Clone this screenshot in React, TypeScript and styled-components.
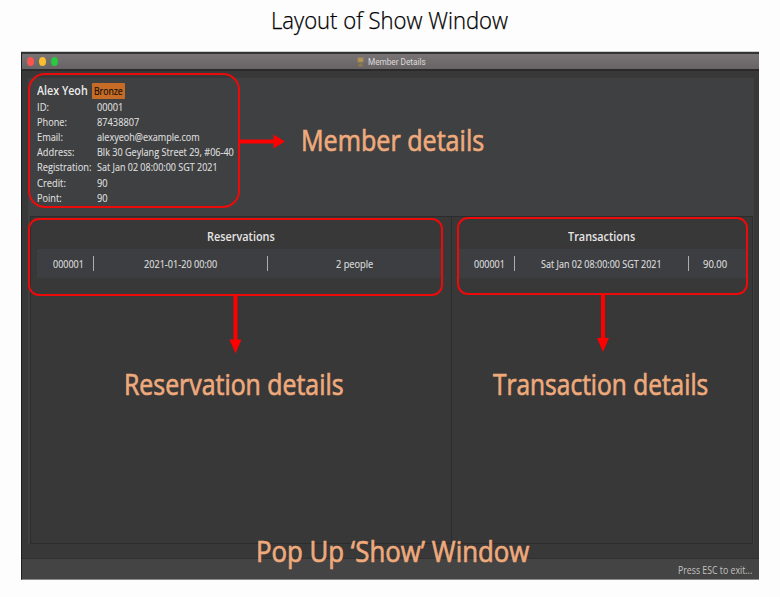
import React, { useLayoutEffect, useRef, useState } from "react";
import styled, { createGlobalStyle } from "styled-components";

const GlobalStyle = createGlobalStyle`
  * { box-sizing: border-box; }
  body { margin: 0; background: #fdfdfd; }
`;

const Page = styled.main`
  width: 780px;
  height: 597px;
  overflow: hidden;
  background: #fdfdfd;
  font-family: "Open Sans", "Noto Sans", sans-serif;
`;

const Heading = styled.h1`
  margin: 0;
  height: 52px;
  padding: 4px 0 0 271px;
  font-size: 23px;
  font-weight: 300;
  line-height: 33px;
  color: #000;
  -webkit-text-stroke: 0.25px #000;
`;

const FitBox = styled.span<{ $w: number }>`
  display: inline-block;
  flex: none;
  width: ${(p) => p.$w}px;
  white-space: nowrap;
  vertical-align: top;
`;

const FitText = styled.span`
  display: inline-block;
  transform-origin: 0 50%;
`;

/** Condenses one line of text horizontally to the given width. */
function Fit({ w, children }: { w: number; children: string }) {
  const ref = useRef<HTMLSpanElement>(null);
  const [scale, setScale] = useState(1);
  useLayoutEffect(() => {
    const measure = () => ref.current && setScale(w / ref.current.offsetWidth);
    measure();
    document.fonts.ready.then(measure);
  }, [w, children]);
  return (
    <FitBox $w={w}>
      <FitText ref={ref} style={{ transform: `scaleX(${scale})` }}>{children}</FitText>
    </FitBox>
  );
}

const Window = styled.section`
  position: relative;
  display: flex;
  flex-direction: column;
  width: 738px;
  height: 528px;
  margin-left: 21px;
  background: #383838;
  border-left: 1px solid #1f2121;
  border-top: 2px solid #323535;
  border-bottom: 1px solid #8a8a8a;
  box-shadow: 0 -1px 0 #c9cccb;
  color: #dedede;
`;

const TitleBar = styled.header`
  display: flex;
  align-items: center;
  height: 17px;
  flex: none;
  padding: 0 0 1px 5px;
  background: linear-gradient(#787374, #686364);
  border-bottom: 2px solid #2a2a2a;
`;

const Light = styled.i<{ $c: string }>`
  width: 7px;
  height: 9px;
  margin-right: 5px;
  border-radius: 50%;
  background: ${(p) => p.$c};
`;

const WindowTitle = styled.div`
  display: flex;
  align-items: center;
  gap: 4px;
  margin: 2px 0 0 294px;
  font: 9.5px/14px Roboto, sans-serif;
  color: #dcdada;
`;

const Body = styled.div`
  flex: 1;
  display: flex;
  flex-direction: column;
  margin: 7px 5px 14px 6px;
  background: #3e4041;
`;

const Member = styled.div`
  height: 138px;
  flex: none;
  padding: 4px 0 0 9px;
`;

const NameLine = styled.div`
  display: flex;
  align-items: center;
  gap: 4px;
  height: 17px;
  font-size: 13px;
  font-weight: 600;
  line-height: 17px;
  color: #ededed;
`;

const Tag = styled.span`
  height: 16px;
  padding: 0 2px;
  border-radius: 1px;
  background: #c66c26;
  color: #15100c;
  font-size: 10.5px;
  font-weight: 400;
  line-height: 16px;
  -webkit-text-stroke: 0.2px #15100c;
`;

const Field = styled.div`
  display: grid;
  grid-template-columns: 60px auto;
  height: 15.12px;
  font-size: 11px;
  line-height: 16px;
  -webkit-text-stroke: 0.15px #dedede;
`;

const Panels = styled.div`
  flex: 1;
  display: grid;
  grid-template-columns: 422px 301px;
  padding: 0 0 0 2px;
`;

const Panel = styled.section<{ $side: "left" | "right" }>`
  padding: ${(p) => (p.$side === "left" ? "11px 8px 0 6px" : "11px 4px 0 6px")};
  background: #383838;
  border: 1px solid #2c2c2c;
  border-left-width: ${(p) => (p.$side === "left" ? 1 : 0)}px;
`;

const PanelTitle = styled.h2<{ $indent: number }>`
  margin: 0;
  height: 21px;
  padding-left: ${(p) => p.$indent}px;
  font-size: 12px;
  font-weight: 600;
  line-height: 18px;
  color: #e6e6e6;
`;

const Row = styled.div<{ $cols: string }>`
  display: grid;
  grid-template-columns: ${(p) => p.$cols};
  align-items: center;
  height: 29px;
  background: #3d3e41;
  font-size: 11px;
  line-height: 15px;
  -webkit-text-stroke: 0.15px #dedede;
`;

const Cell = styled.div<{ $lead?: boolean }>`
  display: flex;
  justify-content: center;
  padding-left: ${(p) => (p.$lead ? 6 : 0)}px;
`;

const Bar = styled.div`
  height: 15px;
  background: #adadad;
`;

const Footer = styled.footer`
  height: 21px;
  flex: none;
  display: flex;
  justify-content: flex-end;
  padding: 2px 7px 0 0;
  background: #444;
  border-top: 1px solid #303030;
  font-size: 11px;
  line-height: 17px;
  color: #c2c2c2;
`;

const Callout = styled.div<{ $x: number; $y: number; $w: number; $h: number; $r: number }>`
  position: absolute;
  left: ${(p) => p.$x}px;
  top: ${(p) => p.$y}px;
  width: ${(p) => p.$w}px;
  height: ${(p) => p.$h}px;
  border: 2px solid #ec0a0a;
  border-radius: ${(p) => p.$r}px;
`;

const Arrows = styled.svg`
  position: absolute;
  left: -22px;
  top: -54px;
  pointer-events: none;
`;

const Note = styled.div<{ $x: number; $y: number }>`
  position: absolute;
  left: ${(p) => p.$x}px;
  top: ${(p) => p.$y}px;
  font-family: "Open Sans", sans-serif;
  font-size: 29.5px;
  line-height: 40px;
  color: #efaa7c;
  -webkit-text-stroke: 0.7px #efaa7c;
`;

const fields: [string, number, string, number][] = [
  ["ID:", 12, "00001", 26],
  ["Phone:", 30, "87438807", 42],
  ["Email:", 26, "alexyeoh@example.com", 103],
  ["Address:", 37, "Blk 30 Geylang Street 29, #06-40", 137],
  ["Registration:", 54, "Sat Jan 02 08:00:00 SGT 2021", 121],
  ["Credit:", 29, "90", 11],
  ["Point:", 25, "90", 11],
];

export default function App() {
  return (
    <Page>
      <GlobalStyle />
      <Heading><Fit w={237}>Layout of Show Window</Fit></Heading>
      <Window>
        <TitleBar>
          <Light $c="#fb5550" />
          <Light $c="#fbbd2e" />
          <Light $c="#29c940" />
          <WindowTitle>
            <svg width="7" height="10" viewBox="0 0 7 10">
              <path d="M.5.5h6v4.8h-6z" fill="#a48b50" />
              <path d="M2.5 5h2v2.5h-2zM1 7.5h5v2H1z" fill="#8e7849" />
              <path d="M1.5 2h4M1.5 3.7h4" stroke="#bca466" strokeWidth=".7" />
            </svg>
            <Fit w={58}>Member Details</Fit>
          </WindowTitle>
        </TitleBar>
        <Body>
          <Member>
            <NameLine>
              <Fit w={51}>Alex Yeoh</Fit>
              <Tag><Fit w={29}>Bronze</Fit></Tag>
            </NameLine>
            {fields.map(([label, lw, value, vw]) => (
              <Field key={label}>
                <Fit w={lw}>{label}</Fit>
                <Fit w={vw}>{value}</Fit>
              </Field>
            ))}
          </Member>
          <Panels>
            <Panel $side="left">
              <PanelTitle $indent={170}><Fit w={68}>Reservations</Fit></PanelTitle>
              <Row $cols="56px 1px 173px 1px 172px">
                <Cell $lead><Fit w={31}>000001</Fit></Cell>
                <Bar />
                <Cell><Fit w={73}>2021-01-20 00:00</Fit></Cell>
                <Bar />
                <Cell><Fit w={37}>2 people</Fit></Cell>
              </Row>
            </Panel>
            <Panel $side="right">
              <PanelTitle $indent={110}><Fit w={67}>Transactions</Fit></PanelTitle>
              <Row $cols="56px 1px 173px 1px 51px">
                <Cell $lead><Fit w={31}>000001</Fit></Cell>
                <Bar />
                <Cell><Fit w={121}>Sat Jan 02 08:00:00 SGT 2021</Fit></Cell>
                <Bar />
                <Cell><Fit w={24}>90.00</Fit></Cell>
              </Row>
            </Panel>
          </Panels>
        </Body>
        <Footer><Fit w={74}>Press ESC to exit...</Fit></Footer>

        <Callout $x={6} $y={19} $w={212} $h={135} $r={17} />
        <Callout $x={6} $y={164} $w={415} $h={78} $r={11} />
        <Callout $x={435} $y={163} $w={291} $h={78} $r={11} />
        <Arrows width="780" height="597" fill="#fe0000">
          <path d="M239 139.500h34.500v-5l11.500 7-11.500 7v-5H239z" />
          <path d="M233.500 295h4v44.500h4l-6 14-6-14h4z" />
          <path d="M601 294h4v44h4l-6 14-6-14h4z" />
        </Arrows>
        <Note $x={279} $y={66}><Fit w={183}>Member details</Fit></Note>
        <Note $x={102} $y={310}><Fit w={220}>Reservation details</Fit></Note>
        <Note $x={471} $y={310}><Fit w={215}>Transaction details</Fit></Note>
        <Note $x={234} $y={477}><Fit w={273}>Pop Up ‘Show’ Window</Fit></Note>
      </Window>
    </Page>
  );
}
